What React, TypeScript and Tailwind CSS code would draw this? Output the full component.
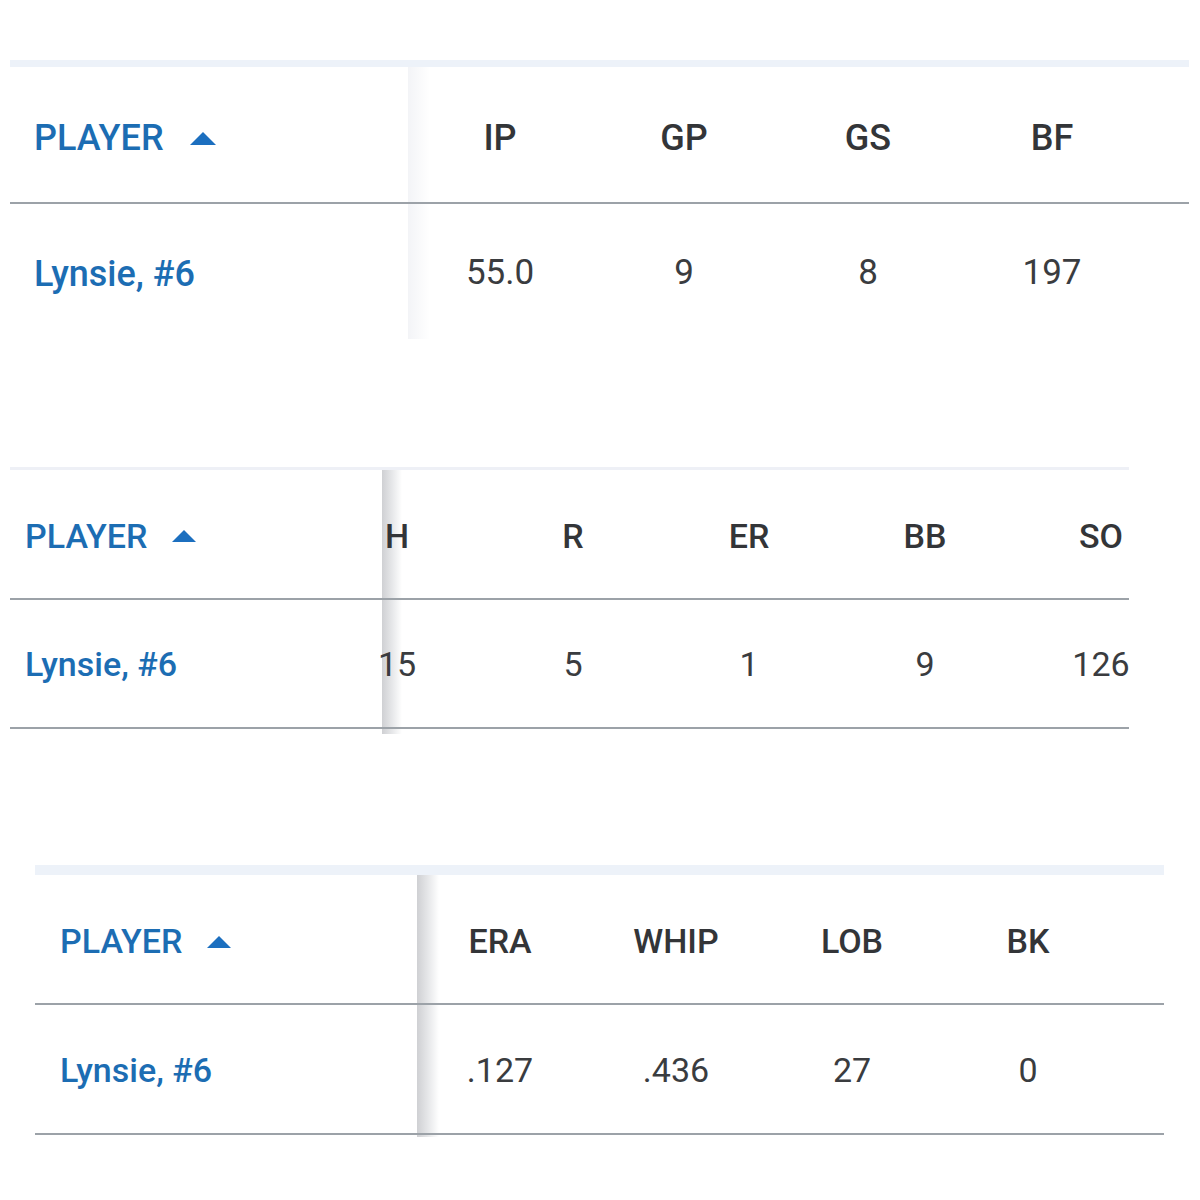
import React from "react";

const Tri = ({ w }: { w: number }) => (
  <svg width={w} height={Math.round(w / 2)} viewBox="0 0 26 13" className="shrink-0">
    <path d="M13 0 L26 13 L0 13 Z" fill="#1c6fbf" />
  </svg>
);

type TableProps = {
  wrap: string;
  band: string;
  playerCol: string;
  pad: string;
  headRow: string;
  bodyRow: string;
  statsOffset: string;
  colW: string;
  text: string;
  numText: string;
  shadow: string;
  bottomLine: boolean;
  cols: string[];
  vals: string[];
  tri: number;
  gap: string;
};

function StatTable(p: TableProps) {
  return (
    <div className={p.wrap}>
      <div className={p.band} />
      <div className={`relative flex ${p.text}`}>
        <div className={p.shadow} />
        {/* sticky player column */}
        <div className={`shrink-0 bg-white relative z-10 ${p.playerCol}`}>
          <div className={`flex items-center ${p.pad} ${p.gap} ${p.headRow} font-medium text-[#1c6db3]`}>
            <span>PLAYER</span>
            <Tri w={p.tri} />
          </div>
          <div className="h-[2px] bg-[#9ca2a8]" />
          <div className={`flex items-center ${p.pad} ${p.bodyRow} font-medium text-[#1c6db3]`}>
            <span>Lynsie, #6</span>
          </div>
          {p.bottomLine && <div className="h-[2px] bg-[#9ca2a8]" />}
        </div>
        {/* scrolled stats area */}
        <div className="relative z-10 flex-1 overflow-hidden">
          <div className={`flex ${p.statsOffset}`}>
            {p.cols.map((c) => (
              <div key={c} className={`shrink-0 flex items-center justify-center ${p.colW} ${p.headRow} font-medium text-[#333538]`}>
                {c}
              </div>
            ))}
          </div>
          <div className="h-[2px] bg-[#9ca2a8]" />
          <div className={`flex ${p.statsOffset} ${p.numText}`}>
            {p.vals.map((v, i) => (
              <div key={i} className={`shrink-0 flex items-center justify-center ${p.colW} ${p.bodyRow} font-normal text-[#3a3c3f]`}>
                {v}
              </div>
            ))}
          </div>
          {p.bottomLine && <div className="h-[2px] bg-[#9ca2a8]" />}
        </div>
      </div>
    </div>
  );
}

export default function App() {
  return (
    <div
      className="w-[1200px] h-[1200px] bg-white overflow-hidden"
      style={{ fontFamily: "Roboto, 'Noto Sans', 'Liberation Sans', sans-serif" }}
    >
      <div className="pt-[60px]">
        <StatTable
          wrap="ml-[10px] w-[1179px]"
          band="h-[7px] bg-[#edf2f9]"
          playerCol="w-[398px]"
          pad="pl-[24px]"
          headRow="h-[135px] pt-[7px]"
          bodyRow="h-[135px] pt-[4px]"
          statsOffset="ml-0"
          colW="w-[184px]"
          text="text-[36px]"
          numText="text-[35px]"
          shadow="absolute left-[398px] top-0 h-[272px] w-[22px] bg-gradient-to-r from-[#f3f4f7] to-white/0 z-0"
          bottomLine={false}
          cols={["IP", "GP", "GS", "BF"]}
          vals={["55.0", "9", "8", "197"]}
          tri={26}
          gap="gap-[26px]"
        />
        <div className="h-[128px]" />
        <StatTable
          wrap="ml-[10px] w-[1119px]"
          band="h-[3px] bg-[#eef0f6]"
          playerCol="w-[366px]"
          pad="pl-[15px]"
          headRow="h-[128px] pt-[4px]"
          bodyRow="h-[127px] pt-[1px]"
          statsOffset="-ml-[67px]"
          colW="w-[176px]"
          text="text-[34px]"
          numText="text-[34px]"
          shadow="absolute left-[372px] top-0 h-[264px] w-[20px] bg-gradient-to-r from-[#cfd0d3] via-[#e6e7e9] to-white/0 z-0"
          bottomLine={true}
          cols={["H", "R", "ER", "BB", "SO"]}
          vals={["15", "5", "1", "9", "126"]}
          tri={24}
          gap="gap-[25px]"
        />
        <div className="h-[136px]" />
        <StatTable
          wrap="ml-[35px] w-[1129px]"
          band="h-[10px] bg-[#edf2f9]"
          playerCol="w-[382px]"
          pad="pl-[25px]"
          headRow="h-[128px] pt-[5px]"
          bodyRow="h-[128px] pt-[3px]"
          statsOffset="-ml-[5px]"
          colW="w-[176px]"
          text="text-[34px]"
          numText="text-[34px]"
          shadow="absolute left-[382px] top-0 h-[262px] w-[22px] bg-gradient-to-r from-[#cfd0d3] via-[#e6e7e9] to-white/0 z-0"
          bottomLine={true}
          cols={["ERA", "WHIP", "LOB", "BK"]}
          vals={[".127", ".436", "27", "0"]}
          tri={24}
          gap="gap-[25px]"
        />
      </div>
    </div>
  );
}
